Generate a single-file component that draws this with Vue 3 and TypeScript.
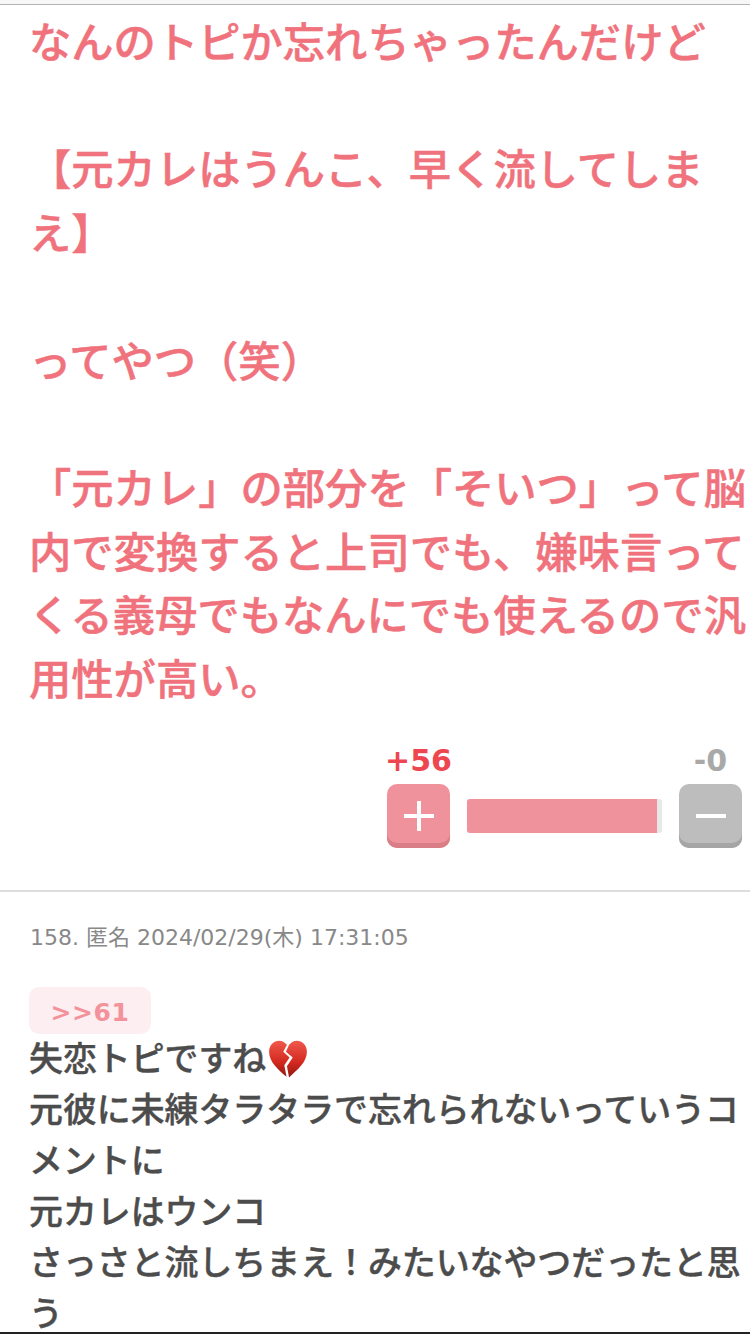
<script setup lang="ts">
const pinkLines = [
  'なんのトピか忘れちゃったんだけど',
  '',
  '【元カレはうんこ、早く流してしま',
  'え】',
  '',
  'ってやつ（笑）',
  '',
  '「元カレ」の部分を「そいつ」って脳',
  '内で変換すると上司でも、嫌味言って',
  'くる義母でもなんにでも使えるので汎',
  '用性が高い。',
]

const plusCount = 56
const minusCount = 0
const ratio = (plusCount / (plusCount + minusCount)) * 97.5

const replyLines = [
  '元彼に未練タラタラで忘れられないっていうコ',
  'メントに',
  '元カレはウンコ',
  'さっさと流しちまえ！みたいなやつだったと思',
  'う',
]
</script>

<template>
  <div class="page">
    <div class="top-line"></div>

    <section class="comment">
      <p class="pink-body">
        <span v-for="(line, i) in pinkLines" :key="i" class="line">{{ line || '\u00a0' }}</span>
      </p>

      <div class="votes">
        <div class="vote-col">
          <span class="count plus">+{{ plusCount }}</span>
          <button class="btn btn-plus" aria-label="plus">
            <svg width="32" height="32" viewBox="0 0 32 32"><path d="M16 1v30M1 16h30" stroke="#fff" stroke-width="4" fill="none" /></svg>
          </button>
        </div>
        <div class="bar">
          <div class="bar-fill" :style="{ width: ratio + '%' }"></div>
        </div>
        <div class="vote-col">
          <span class="count minus">-{{ minusCount }}</span>
          <button class="btn btn-minus" aria-label="minus">
            <svg width="32" height="32" viewBox="0 0 32 32"><path d="M1 16h30" stroke="#fff" stroke-width="4" fill="none" /></svg>
          </button>
        </div>
      </div>
    </section>

    <section class="reply">
      <div class="meta">158. 匿名 2024/02/29(木) 17:31:05</div>
      <div class="anchor">&gt;&gt;61</div>
      <p class="reply-body">
        <span class="line">失恋トピですね<svg class="emoji" viewBox="0 0 40 40" width="42" height="42">
          <defs>
            <linearGradient id="heart" x1="0" y1="0" x2="0" y2="1">
              <stop offset="0" stop-color="#ef5a4c" />
              <stop offset="0.6" stop-color="#d3281f" />
              <stop offset="1" stop-color="#8f1a10" />
            </linearGradient>
          </defs>
          <path d="M18.6 37 C11 30 2 23 2 13 C2 6.5 6.5 2.500 11.500 2.500 C14.500 2.500 17 4 19 6.500 L15.500 13 L21.500 18.500 L16.500 26 Z" fill="url(#heart)" />
          <path d="M21 37.500 C29 30 38 23 38 13 C38 6.500 33.500 2.500 28.500 2.500 C25.500 2.500 23 4 21 6.500 L18 13 L24.500 18.500 L19 27 Z" fill="url(#heart)" />
        </svg></span>
        <span v-for="(line, i) in replyLines" :key="i" class="line">{{ line }}</span>
      </p>
    </section>

    <div class="bottom-line"></div>
  </div>
</template>

<style scoped>
.page {
  position: relative;
  width: 750px;
  height: 1334px;
  overflow: hidden;
  background: #fff;
  font-family: "Noto Sans CJK JP", "Noto Sans", sans-serif;
}

.top-line {
  height: 5px;
  background: #f7f7f7;
  border-bottom: 1px solid #b4b4b4;
  box-sizing: border-box;
  margin-bottom: 3px;
}

.comment {
  padding: 0 0 42px 29px;
  border-bottom: 2px solid #ddd;
}

.pink-body {
  margin: 0;
  font-size: 42.3px;
  line-height: 63.7px;
  font-weight: 500;
  color: #f0727c;
  -webkit-text-stroke: 0.5px #f0727c;
}

.line {
  display: block;
  white-space: nowrap;
}

.votes {
  display: flex;
  align-items: flex-end;
  justify-content: flex-end;
  gap: 17px;
  margin-top: 38px;
  padding-right: 8px;
}

.vote-col {
  display: flex;
  flex-direction: column;
  align-items: center;
  width: 63px;
}

.count {
  margin-bottom: 9px;
  font-family: "DejaVu Sans", sans-serif;
  font-weight: 700;
  font-size: 30px;
  line-height: 28px;
  white-space: nowrap;
}

.plus {
  color: #ee4650;
}

.minus {
  color: #a9a9a9;
}

.btn {
  display: flex;
  align-items: center;
  justify-content: center;
  width: 63px;
  height: 64px;
  padding: 0;
  border: 0;
  border-radius: 10px;
}

.btn-plus {
  background: #f0929c;
  box-shadow: inset 0 -5px 0 #d97d87;
}

.btn-minus {
  background: #bdbdbd;
  box-shadow: inset 0 -5px 0 #a5a5a5;
}

.bar {
  width: 195px;
  height: 34px;
  margin-bottom: 15px;
  background: #e8e8e8;
  border-radius: 3px;
  overflow: hidden;
}

.bar-fill {
  height: 100%;
  background: #f0929c;
}

.reply {
  padding: 31px 0 0 30px;
}

.meta {
  font-family: "DejaVu Sans", "Noto Sans CJK JP", sans-serif;
  font-size: 22px;
  line-height: 30px;
  color: #888;
}

.anchor {
  width: 122px;
  height: 47px;
  margin: 34px 0 0 -1px;
  border-radius: 10px;
  background: #fdeef1;
  color: #f4929c;
  font-family: "DejaVu Sans", sans-serif;
  font-weight: 700;
  font-size: 25px;
  line-height: 51px;
  letter-spacing: 0.6px;
  text-align: center;
}

.reply-body {
  margin: -3px 0 0 -1px;
  font-size: 33.9px;
  line-height: 51px;
  font-weight: 500;
  color: #4c4c4c;
  -webkit-text-stroke: 0.4px #4c4c4c;
}

.emoji {
  vertical-align: -9px;
  margin-left: 1px;
}

.bottom-line {
  position: absolute;
  left: 0;
  right: 0;
  bottom: 0;
  height: 2px;
  background: #222;
}
</style>

<style>
body {
  margin: 0;
}
</style>
